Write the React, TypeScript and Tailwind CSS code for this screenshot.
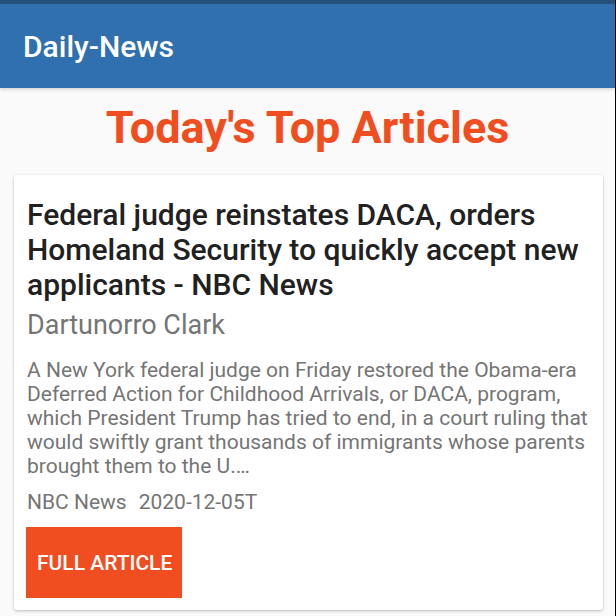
export default function App() {
  return (
    <div className="min-h-screen border-r border-black bg-[#fafafa] font-[Roboto,sans-serif]">
      <header className="border-t-4 border-[#24517c] bg-[#3070af] px-[23px] shadow-[0_1px_4px_rgba(0,0,0,0.2)]">
        <div className="flex h-[84px] items-center pt-px text-[30px] font-medium text-white">Daily-News</div>
      </header>
      <main className="pr-3 pb-[6px] pl-[14px]">
        <h1 className="flex h-20 items-center justify-center pr-[2px] text-[45px] font-bold text-[#f04d20]">Today's Top Articles</h1>
        <article className="mt-[7px] rounded-[3px] bg-white px-3 pt-[22px] pb-3 shadow-[0_1px_3px_rgba(0,0,0,0.25)]">
          <div className="pl-px">
            <h2 className="text-[30px] leading-[35px] font-medium text-[#212121]">
              Federal judge reinstates DACA, orders Homeland Security to quickly accept new applicants - NBC News
            </h2>
            <p className="mt-[6px] text-[27px] leading-[34px] text-[#757575]">Dartunorro Clark</p>
            <p className="mt-4 text-[21px] leading-[24px] text-[#757575]">
              A New York federal judge on Friday restored the Obama-era Deferred Action for Childhood Arrivals, or DACA, program, which President Trump has tried to end, in a court ruling that would swiftly grant thousands of immigrants whose parents brought them to the U.…
            </p>
            <div className="mt-[10px] flex gap-3 text-[21px] leading-[28px] text-[#757575]">
              <span>NBC News</span>
              <time dateTime="2020-12-05">2020-12-05T</time>
            </div>
          </div>
          <button type="button" className="mt-[11px] block bg-[#f04d20] pt-6 pr-[10px] pb-[23px] pl-[11px] text-[21px] leading-[24px] font-medium text-white">FULL ARTICLE</button>
        </article>
      </main>
    </div>
  );
}
